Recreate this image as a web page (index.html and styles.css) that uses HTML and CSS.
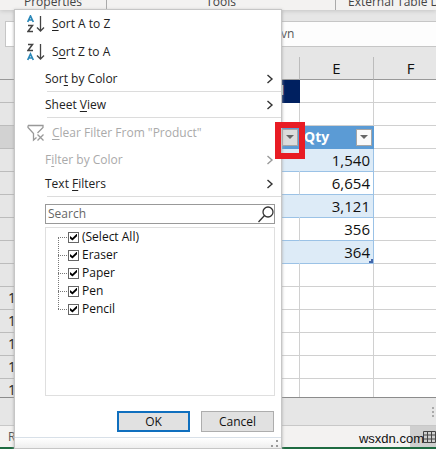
FILE: index.html
```html
<!DOCTYPE html>
<html lang="en">
<head>
<meta charset="utf-8">
<title>Table filter</title>
<link rel="stylesheet" href="styles.css">
</head>
<body>
<header class="ribbon">
  <span class="group group-properties">Properties</span>
  <span class="group group-tools">Tools</span>
  <span class="group group-external">External Table Data</span>
</header>
<div class="formula-row"><span class="formula-fx"></span><div class="formula">vn</div></div>
<main class="sheet">
  <table class="grid">
    <colgroup><col class="col-head"><col class="col-d"><col class="col-e"><col class="col-f"><col></colgroup>
    <thead>
      <tr><th></th><th></th><th>E</th><th>F</th><th></th></tr>
    </thead>
    <tbody>
      <tr><th></th><td class="navy">l</td><td></td><td></td><td></td></tr>
      <tr><th></th><td></td><td></td><td></td><td></td></tr>
      <tr class="fields"><th class="current"></th>
        <td><div class="field"><button class="drop" type="button" aria-label="Filter Product"></button><span class="marker"></span></div></td>
        <td><div class="field">Qty<button class="drop" type="button" aria-label="Filter Qty"></button></div></td><td></td><td></td></tr>
      <tr class="data band"><th></th><td></td><td>1,540</td><td></td><td></td></tr>
      <tr class="data"><th></th><td></td><td>6,654</td><td></td><td></td></tr>
      <tr class="data band"><th></th><td></td><td>3,121</td><td></td><td></td></tr>
      <tr class="data"><th></th><td></td><td>356</td><td></td><td></td></tr>
      <tr class="data band last"><th></th><td></td><td>364</td><td></td><td></td></tr>
      <tr><th></th><td></td><td></td><td></td><td></td></tr>
      <tr><th>10</th><td></td><td></td><td></td><td></td></tr>
      <tr><th>11</th><td></td><td></td><td></td><td></td></tr>
      <tr><th>12</th><td></td><td></td><td></td><td></td></tr>
      <tr><th>13</th><td></td><td></td><td></td><td></td></tr>
      <tr><th>14</th><td></td><td></td><td></td><td></td></tr>
    </tbody>
  </table>
</main>
<div class="tabs"><span class="dots"><i></i><i></i><i></i></span></div>
<footer class="status">
  <span class="ready">Ready</span>
  <span class="site">wsxdn.com</span>
  <span class="view"><svg width="14" height="14" viewBox="0 0 14 14"><path d="M1.500 1.500h12v11h-12zM1 5h13M1 9h13M5.500 1v12M9.500 1v12" fill="none" stroke="#444"/></svg></span>
</footer>

<form class="menu">
  <button class="item tall" type="button">
    <svg class="icon" width="18" height="18" viewBox="0 0 18 18"><path d="M.700 7 3.500 1 6.300 7M2 5h3" fill="none" stroke="#2b88b8" stroke-width="1.700"/><path d="M1 10.500h4.500L1 16.500h5" fill="none" stroke="#444" stroke-width="1.500"/><path d="M13.500 1v15M10 12.500l3.500 3.500 3.500-3.500" fill="none" stroke="#444" stroke-width="1.300"/></svg>
    <span><u>S</u>ort A to Z</span>
  </button>
  <button class="item tall" type="button">
    <svg class="icon" width="18" height="18" viewBox="0 0 18 18"><path d="M1 1.500h4.500L1 7.500h5" fill="none" stroke="#444" stroke-width="1.500"/><path d="M.700 17 3.500 11 6.300 17M2 15h3" fill="none" stroke="#2b88b8" stroke-width="1.700"/><path d="M13.500 1v15M10 12.500l3.500 3.500 3.500-3.500" fill="none" stroke="#444" stroke-width="1.300"/></svg>
    <span>S<u>o</u>rt Z to A</span>
  </button>
  <button class="item" type="button"><span>Sor<u>t</u> by Color</span><svg class="arrow" width="8" height="10" viewBox="0 0 8 10"><path d="M1.500 1 6 5 1.500 9"/></svg></button>
  <hr>
  <button class="item" type="button"><span>Sheet <u>V</u>iew</span><svg class="arrow" width="8" height="10" viewBox="0 0 8 10"><path d="M1.500 1 6 5 1.500 9"/></svg></button>
  <hr>
  <button class="item tall clear" type="button" disabled>
    <svg class="icon" width="18" height="18" viewBox="0 0 18 18"><path d="M1 1.500h15v2L10.500 9M1 1.500v2L6.500 9.500v6.500l3-2.500" fill="none" stroke="#999" stroke-width="1.300"/><path d="M10.500 10.500l6 6M16.500 10.500l-6 6" stroke="#999" stroke-width="1.300"/></svg>
    <span><u>C</u>lear Filter From "Product"</span>
  </button>
  <button class="item compact" type="button" disabled><span>F<u>i</u>lter by Color</span><svg class="arrow" width="8" height="10" viewBox="0 0 8 10"><path d="M1.500 1 6 5 1.500 9"/></svg></button>
  <button class="item compact" type="button"><span>Text <u>F</u>ilters</span><svg class="arrow" width="8" height="10" viewBox="0 0 8 10"><path d="M1.500 1 6 5 1.500 9"/></svg></button>
  <hr>
  <div class="search">
    <input type="text" placeholder="Search" aria-label="Search">
    <svg width="16" height="17" viewBox="0 0 16 17"><circle cx="10" cy="6" r="5"/><path d="M6.500 9.500.500 16"/></svg>
  </div>
  <ul class="values">
    <li><label><input type="checkbox" checked>(Select All)</label></li>
    <li><label><input type="checkbox" checked>Eraser</label></li>
    <li><label><input type="checkbox" checked>Paper</label></li>
    <li><label><input type="checkbox" checked>Pen</label></li>
    <li><label><input type="checkbox" checked>Pencil</label></li>
  </ul>
  <div class="actions">
    <button class="action primary" type="button">OK</button>
    <button class="action" type="button">Cancel</button>
  </div>
  <div class="grip"><svg width="7" height="7" viewBox="0 0 7 7"><path d="M5 0h2v2H5zM0 5h2v2H0zM5 5h2v2H5z" fill="#999"/></svg></div>
</form>
</body>
</html>
```
FILE: styles.css
```css
* { box-sizing: border-box; }

body {
  margin: 0;
  height: 100vh;
  display: flex;
  flex-direction: column;
  overflow: hidden;
  position: relative;
  background: #e6e6e6;
  color: #222;
  font: 12px/16px "Open Sans", "Noto Sans", sans-serif;
}

button, input { font: inherit; color: inherit; }

/* Ribbon and formula bar */
.ribbon {
  flex: none;
  display: flex;
  align-items: flex-end;
  height: 10px;
  overflow: hidden;
  background: #f3f2f1;
  color: #444;
  box-shadow: 0 1px 4px #c4c4c4;
}
.group { flex: none; white-space: nowrap; text-align: center; }
.group-properties { width: 107px; border-right: 1px solid #aaa; }
.group-tools { width: 229px; border-right: 1px solid #aaa; }
.group-external { padding-left: 12px; }

.formula-row {
  flex: none;
  display: flex;
  height: 26px;
  margin-top: 11px;
  padding-left: 5px;
}
.formula-fx { width: 240px; background: #fff; border: 1px solid #c6c6c6; border-right: 0; }
.formula {
  flex: 1;
  padding: 4px 0 0 36px;
  background: #fdfdfd;
  border: solid #c6c6c6;
  border-width: 1px 0;
  color: #555;
}

/* Worksheet */
.sheet { flex: 1; min-height: 0; overflow: hidden; padding-top: 10px; border-bottom: 1px solid #8c8c8c; }
.grid { width: 100%; table-layout: fixed; border-collapse: separate; border-spacing: 0; }
.col-head { width: 20px; }
.col-d { width: 280px; }
.col-e, .col-f { width: 74px; }
.grid tr { height: 23px; }
.grid th, .grid td {
  height: 23px;
  padding: 0;
  line-height: 20px;
  border: solid #d0d0d0;
  border-width: 0 1px 1px 0;
  background: #fff;
}
.grid th { background: #e6e6e6; border-color: #bcbcbc; font-weight: 400; font-size: 15px; color: #111; }
.grid thead th { border-bottom-color: #999; }
.grid tbody th { padding-left: 8px; text-align: left; font-size: 14px; }
.grid tbody th.current { background: #d2d2d2; }
.grid td.navy { padding-right: 15px; background: #002060; border-color: #002060; color: #fff; text-align: right; }

.field {
  position: relative;
  display: flex;
  align-items: center;
  justify-content: space-between;
  height: 22px;
  padding: 0 1px 0 4px;
  color: #fff;
  font-size: 14px;
  font-weight: 700;
}
.fields td:nth-child(2) .field { justify-content: flex-end; }
.fields td:nth-child(-n+3) { background: #5b9bd5; border-color: #5b9bd5; }
.drop {
  display: grid;
  place-items: center;
  width: 16px;
  height: 17px;
  padding: 0;
  border: 1px solid #a6a6a6;
  background: #fafafa;
}
.fields td:nth-child(2) .drop { background: #dcdcdc; }
.drop::before { content: ""; border: solid transparent; border-width: 4px 4px 0; border-top-color: #666; }
.marker {
  position: absolute;
  z-index: 2;
  top: -4px;
  right: -6px;
  width: 30px;
  height: 37px;
  border: 6px solid #e81c24;
}
.data td:nth-child(-n+3) { border-bottom-color: #9bc2e6; }
.data td:nth-child(3) { padding-right: 3px; text-align: right; font-size: 15px; border-right-color: #9bc2e6; color: #111; }
.band td:nth-child(-n+3) { background: #ddebf7; }
.band td:nth-child(2) { border-right-color: #ddebf7; }
.last td:nth-child(3) { background: linear-gradient(#4468ac, #4468ac) right bottom / 4px 2px no-repeat, linear-gradient(#4468ac, #4468ac) right bottom / 2px 4px no-repeat, #ddebf7; }

/* Sheet tabs and status bar */
.tabs { flex: none; display: flex; justify-content: flex-end; align-items: center; height: 27px; padding-right: 2px; }
.dots { display: grid; gap: 2px; }
.dots i { width: 2px; height: 2px; background: #aaa; }
.status {
  flex: none;
  display: flex;
  align-items: center;
  height: 24px;
  padding-left: 8px;
  background: #f3f2f1;
  border-top: 1px solid #c8c8c8;
  border-bottom: 2px solid #1e6b41;
  color: #555;
}
.site { position: absolute; right: 12px; z-index: 1; font: 13px/16px "Liberation Sans", sans-serif; color: #111; padding-top: 4px; }
.view { display: flex; align-items: center; justify-content: flex-end; width: 26px; height: 100%; margin-left: auto; background: #cfcfcf; }

/* Filter menu */
.menu {
  position: absolute;
  z-index: 1;
  top: 9px;
  left: 14px;
  width: 268px;
  display: flex;
  flex-direction: column;
  background: #fff;
  border: 1px solid #c6c6c6;
  box-shadow: 0 1px 3px #aaa;
}
.item {
  display: flex;
  align-items: center;
  height: 25px;
  padding: 0 7px 0 30px;
  border: 0;
  background: none;
  text-align: left;
}
.item.tall { height: 28px; padding-left: 12px; gap: 7px; }
.item.clear { height: 30px; }
.item.compact { height: 24px; }
.item:disabled { color: #aaa; }
.item u { text-underline-offset: 2px; }
.arrow { margin-left: auto; fill: none; stroke: #333; stroke-width: 1.4; }
.item:disabled .arrow { stroke: #999; }
.menu hr { width: 234px; margin: 0 0 0 auto; border: 0; border-top: 1px solid #dcdcdc; }

.search {
  display: flex;
  align-items: center;
  height: 20px;
  margin: 7px 6px 0 30px;
  border: 1px solid #999;
}
.search input { flex: 1; min-width: 0; padding: 0 0 0 2px; border: 0; outline: 0; background: none; }
.search input::placeholder { color: #666; opacity: 1; }
.search svg { fill: none; stroke: #333; stroke-width: 1.3; }

.values {
  height: 169px;
  margin: 3px 6px 0 30px;
  padding: 0 0 0 12px;
  border: 1px solid #dfdfdf;
  list-style: none;
  color: #111;
}
.values li { position: relative; height: 18px; padding-left: 10px; }
.values label { display: flex; align-items: center; gap: 3px; height: 18px; }
.values li::before { content: ""; position: absolute; left: 0; top: 9px; width: 9px; border-top: 1px dotted #777; }
.values li:not(:last-child)::after { content: ""; position: absolute; left: 0; top: 9px; height: 18px; border-left: 1px dotted #777; }
.values input {
  appearance: none;
  display: grid;
  width: 11px;
  height: 11px;
  margin: 0;
  border: 1px solid #666;
  background: #fff;
}
.values input:checked::before {
  content: "";
  margin: 1px;
  background: #000;
  clip-path: polygon(0 35%, 35% 65%, 100% 0, 100% 38%, 35% 100%, 0 70%);
}

.actions { display: flex; justify-content: flex-end; gap: 11px; margin: 15px 7px 5px 0; }
.action {
  width: 73px;
  height: 21px;
  padding: 0;
  border: 1px solid #adadad;
  background: #e1e1e1;
  line-height: 16px;
  color: #111;
}
.action.primary { border: 2px solid #0f6fbe; }
.grip {
  display: flex;
  justify-content: flex-end;
  align-items: center;
  height: 11px;
  padding-right: 3px;
  border-top: 1px solid #d8e0e8;
  background: linear-gradient(#fff, #eee);
}
```
